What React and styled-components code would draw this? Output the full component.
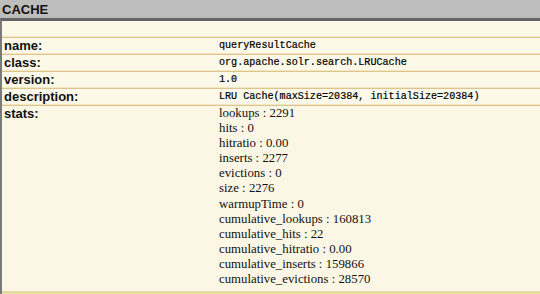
import styled, { createGlobalStyle } from "styled-components";

const GlobalStyle = createGlobalStyle`
  body {
    margin: 0;
    background: #fbf7e4;
  }
`;

const Page = styled.div`
  width: 540px;
  height: 294px;
  overflow: hidden;
  display: flex;
  flex-direction: column;
`;

const Title = styled.h2`
  margin: 0;
  height: 18px;
  padding-left: 2px;
  background: #bdbdbd;
  font-family: "Liberation Sans", Arial, sans-serif;
  font-weight: bold;
  font-size: 13px;
  line-height: 19px;
  color: #111;
`;

const Table = styled.div`
  flex: 1;
  display: flex;
  flex-direction: column;
  border-top: 3px solid #656565;
  border-left: 2px solid #7a7a7a;
  background: #fbf7e4;
`;

const Row = styled.div`
  display: grid;
  grid-template-columns: 217px 1fr;
  height: ${({ $h }) => $h}px;
  box-sizing: border-box;
  border-bottom: 1px solid #ddc48e;
  box-shadow: inset 0 -1px 0 #f4e6c0;
  background: #fcf9e8;
`;

const StatsRow = styled.div`
  display: grid;
  grid-template-columns: 217px 1fr;
  flex: 1;
  border-bottom: 3px solid #e5dca2;
`;

const Label = styled.div`
  padding-left: 2px;
  font-family: "Liberation Sans", Arial, sans-serif;
  font-weight: bold;
  font-size: 13px;
  line-height: 16px;
  color: #111;
`;

const Mono = styled.div`
  font-family: "Liberation Mono", "Courier New", monospace;
  font-size: 10.1px;
  line-height: 16px;
  color: #000;
  -webkit-text-stroke: 0.2px #000;
`;

const Stats = styled.div`
  display: flex;
  flex-direction: column;
  font-family: "Liberation Serif", "Times New Roman", serif;
  font-size: 12.8px;
  line-height: 15.1px;
  color: #111;
`;

const fields = [
  ["name:", "queryResultCache"],
  ["class:", "org.apache.solr.search.LRUCache"],
  ["version:", "1.0"],
  ["description:", "LRU Cache(maxSize=20384, initialSize=20384)"],
];

const stats = [
  ["lookups", "2291"],
  ["hits", "0"],
  ["hitratio", "0.00"],
  ["inserts", "2277"],
  ["evictions", "0"],
  ["size", "2276"],
  ["warmupTime", "0"],
  ["cumulative_lookups", "160813"],
  ["cumulative_hits", "22"],
  ["cumulative_hitratio", "0.00"],
  ["cumulative_inserts", "159866"],
  ["cumulative_evictions", "28570"],
];

export default function App() {
  return (
    <Page>
      <GlobalStyle />
      <Title>CACHE</Title>
      <Table>
        <Row $h={17} />
        {fields.map(([label, value]) => (
          <Row key={label} $h={17}>
            <Label>{label}</Label>
            <Mono>{value}</Mono>
          </Row>
        ))}
        <StatsRow>
          <Label>stats:</Label>
          <Stats>
            {stats.map(([k, v]) => (
              <span key={k}>
                {k} : {v}
              </span>
            ))}
          </Stats>
        </StatsRow>
      </Table>
    </Page>
  );
}
